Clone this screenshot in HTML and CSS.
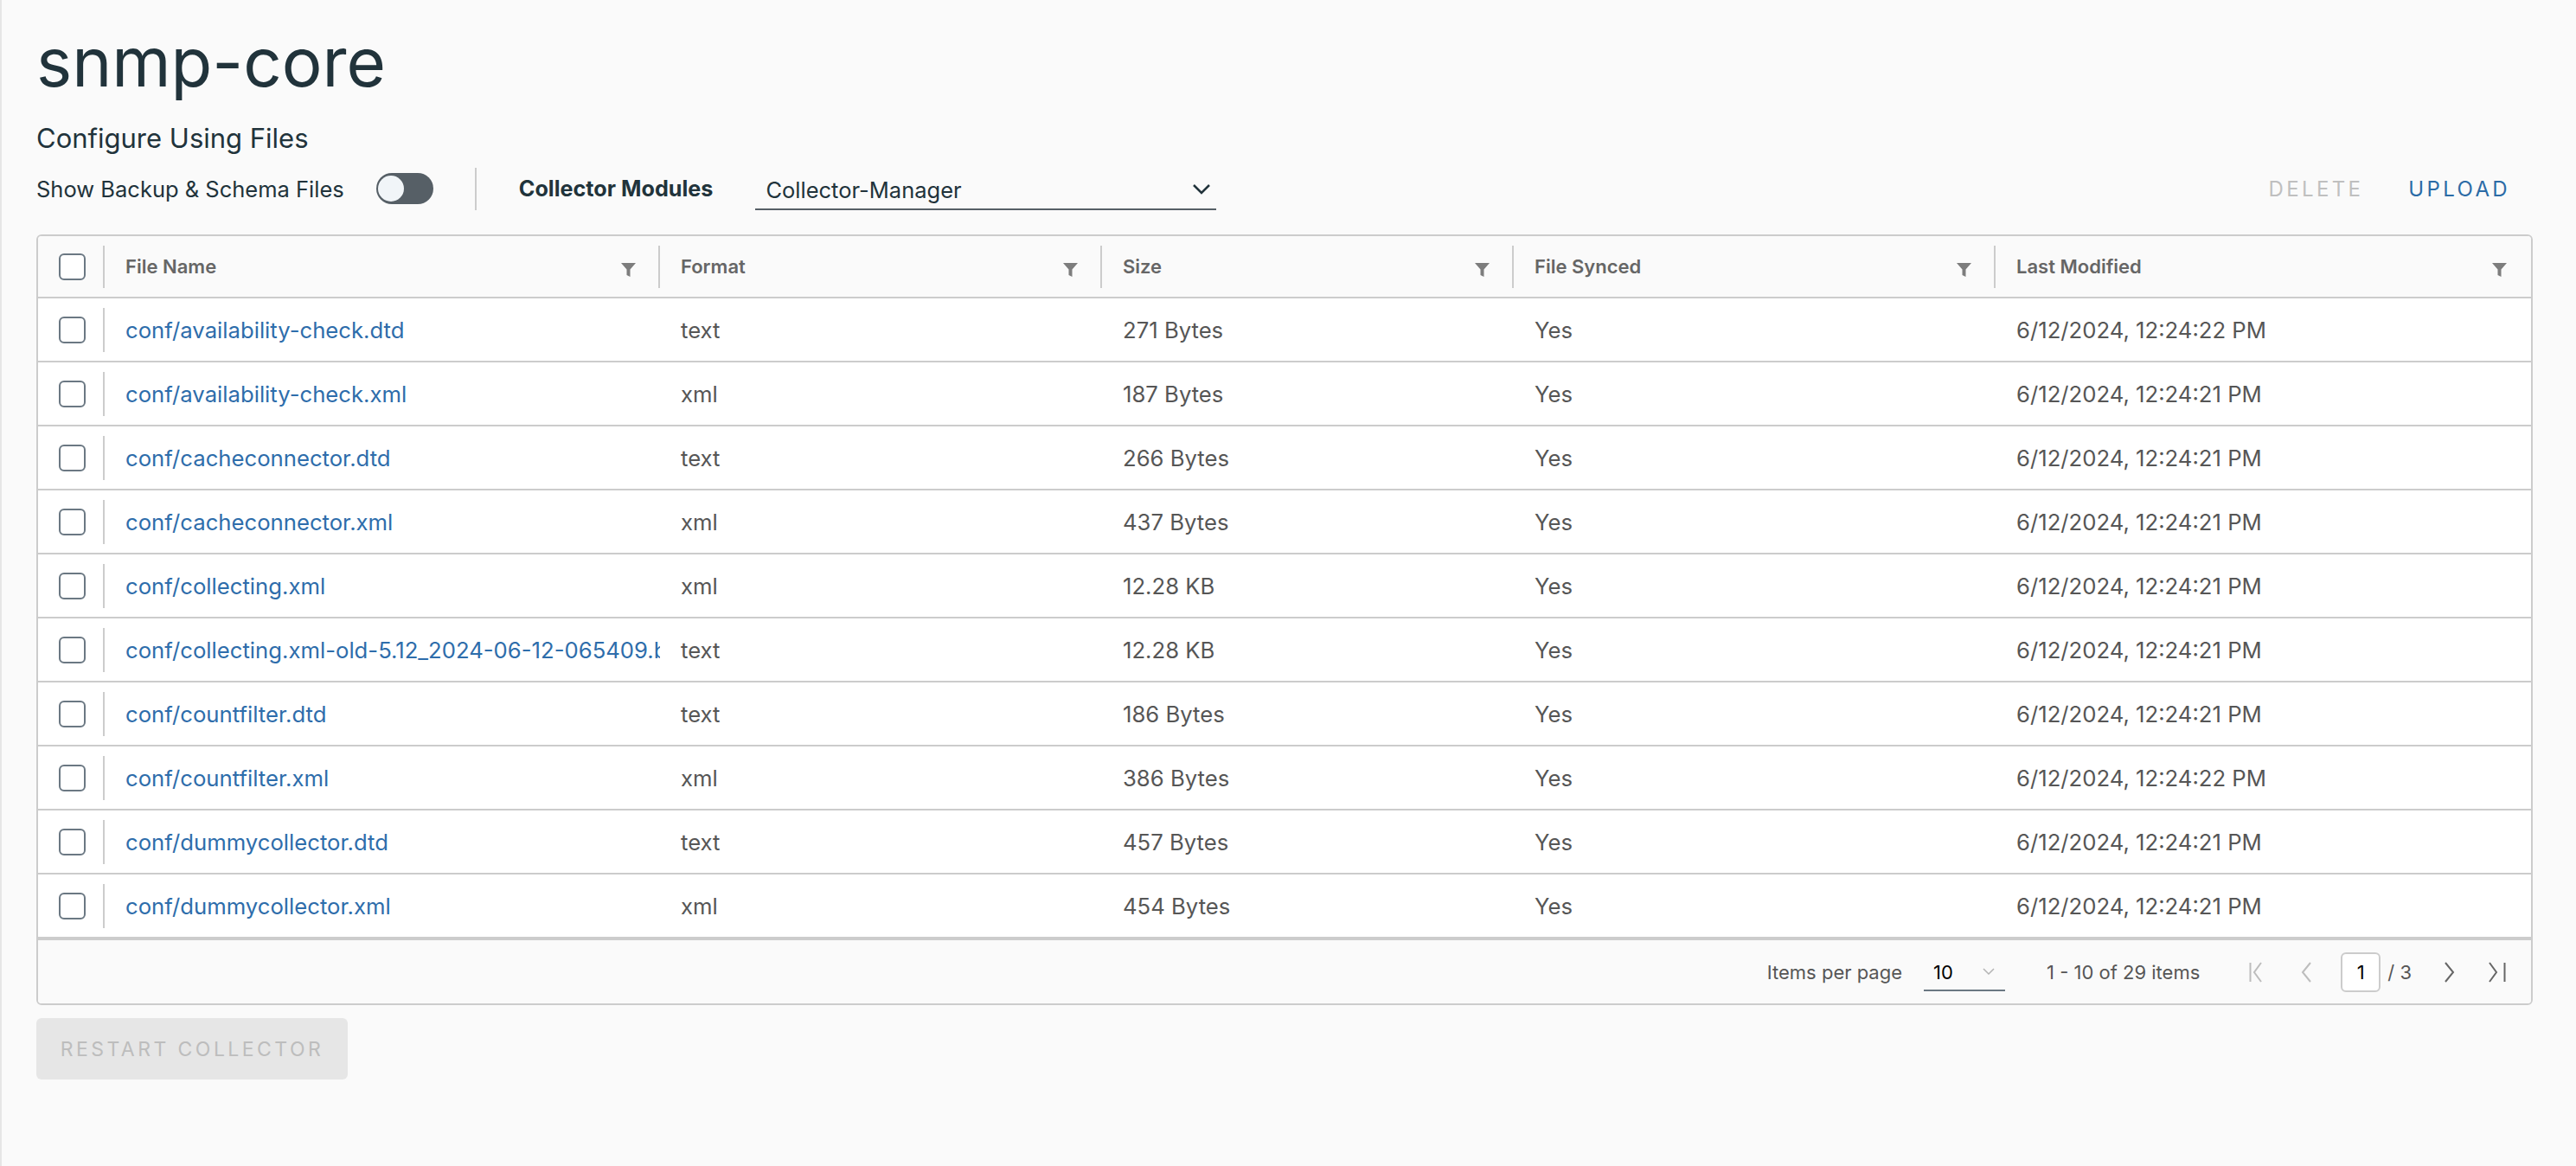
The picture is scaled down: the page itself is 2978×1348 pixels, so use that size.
FILE: index.html
```html
<!DOCTYPE html>
<html lang="en">
<head>
<meta charset="utf-8">
<title>snmp-core</title>
<link rel="stylesheet" href="styles.css">
</head>
<body>
<div class="page">
  <h1 class="title">snmp-core</h1>
  <h2 class="subtitle">Configure Using Files</h2>
  <div class="toolbar">
    <span class="toggle-label">Show Backup &amp; Schema Files</span>
    <span class="toggle"><span class="knob"></span></span>
    <span class="vsep"></span>
    <span class="modules-label">Collector Modules</span>
    <div class="select">
      <span class="select-value">Collector-Manager</span>
      <svg class="select-caret" width="22" height="14" viewBox="0 0 22 14"><polyline points="2,2 11,11 20,2" fill="none" stroke="#21333b" stroke-width="2.5"/></svg>
    </div>
    <div class="toolbar-spacer"></div>
    <button class="link-btn disabled">DELETE</button>
    <button class="link-btn primary">UPLOAD</button>
  </div>

  <div class="grid">
    <div class="row head">
      <div class="cell cb sep"><span class="checkbox"></span></div>
      <div class="cell hcell sep"><span>File Name</span><svg class="funnel" viewBox="0 0 17 17"><path d="M0 1 H17 L10.5 8.5 V17 L6.5 15 V8.5 Z"/></svg></div>
      <div class="cell hcell sep"><span>Format</span><svg class="funnel" viewBox="0 0 17 17"><path d="M0 1 H17 L10.5 8.5 V17 L6.5 15 V8.5 Z"/></svg></div>
      <div class="cell hcell sep"><span>Size</span><svg class="funnel" viewBox="0 0 17 17"><path d="M0 1 H17 L10.5 8.5 V17 L6.5 15 V8.5 Z"/></svg></div>
      <div class="cell hcell sep"><span>File Synced</span><svg class="funnel" viewBox="0 0 17 17"><path d="M0 1 H17 L10.5 8.5 V17 L6.5 15 V8.5 Z"/></svg></div>
      <div class="cell hcell"><span>Last Modified</span><svg class="funnel" viewBox="0 0 17 17"><path d="M0 1 H17 L10.5 8.5 V17 L6.5 15 V8.5 Z"/></svg></div>
    </div>

    <div class="row">
      <div class="cell cb sep"><span class="checkbox"></span></div>
      <div class="cell name"><a href="#">conf/availability-check.dtd</a></div>
      <div class="cell">text</div><div class="cell">271 Bytes</div><div class="cell">Yes</div><div class="cell">6/12/2024, 12:24:22 PM</div>
    </div>
    <div class="row">
      <div class="cell cb sep"><span class="checkbox"></span></div>
      <div class="cell name"><a href="#">conf/availability-check.xml</a></div>
      <div class="cell">xml</div><div class="cell">187 Bytes</div><div class="cell">Yes</div><div class="cell">6/12/2024, 12:24:21 PM</div>
    </div>
    <div class="row">
      <div class="cell cb sep"><span class="checkbox"></span></div>
      <div class="cell name"><a href="#">conf/cacheconnector.dtd</a></div>
      <div class="cell">text</div><div class="cell">266 Bytes</div><div class="cell">Yes</div><div class="cell">6/12/2024, 12:24:21 PM</div>
    </div>
    <div class="row">
      <div class="cell cb sep"><span class="checkbox"></span></div>
      <div class="cell name"><a href="#">conf/cacheconnector.xml</a></div>
      <div class="cell">xml</div><div class="cell">437 Bytes</div><div class="cell">Yes</div><div class="cell">6/12/2024, 12:24:21 PM</div>
    </div>
    <div class="row">
      <div class="cell cb sep"><span class="checkbox"></span></div>
      <div class="cell name"><a href="#">conf/collecting.xml</a></div>
      <div class="cell">xml</div><div class="cell">12.28 KB</div><div class="cell">Yes</div><div class="cell">6/12/2024, 12:24:21 PM</div>
    </div>
    <div class="row">
      <div class="cell cb sep"><span class="checkbox"></span></div>
      <div class="cell name"><a href="#">conf/collecting.xml-old-5.12_2024-06-12-065409.bak</a></div>
      <div class="cell">text</div><div class="cell">12.28 KB</div><div class="cell">Yes</div><div class="cell">6/12/2024, 12:24:21 PM</div>
    </div>
    <div class="row">
      <div class="cell cb sep"><span class="checkbox"></span></div>
      <div class="cell name"><a href="#">conf/countfilter.dtd</a></div>
      <div class="cell">text</div><div class="cell">186 Bytes</div><div class="cell">Yes</div><div class="cell">6/12/2024, 12:24:21 PM</div>
    </div>
    <div class="row">
      <div class="cell cb sep"><span class="checkbox"></span></div>
      <div class="cell name"><a href="#">conf/countfilter.xml</a></div>
      <div class="cell">xml</div><div class="cell">386 Bytes</div><div class="cell">Yes</div><div class="cell">6/12/2024, 12:24:22 PM</div>
    </div>
    <div class="row">
      <div class="cell cb sep"><span class="checkbox"></span></div>
      <div class="cell name"><a href="#">conf/dummycollector.dtd</a></div>
      <div class="cell">text</div><div class="cell">457 Bytes</div><div class="cell">Yes</div><div class="cell">6/12/2024, 12:24:21 PM</div>
    </div>
    <div class="row">
      <div class="cell cb sep"><span class="checkbox"></span></div>
      <div class="cell name"><a href="#">conf/dummycollector.xml</a></div>
      <div class="cell">xml</div><div class="cell">454 Bytes</div><div class="cell">Yes</div><div class="cell">6/12/2024, 12:24:21 PM</div>
    </div>

    <div class="footer">
      <span class="ipp-label">Items per page</span>
      <div class="ipp-select"><span>10</span><svg width="14" height="9" viewBox="0 0 14 9"><polyline points="1,1 7,7 13,1" fill="none" stroke="#b3b3b3" stroke-width="1.5"/></svg></div>
      <span class="range">1 - 10 of 29 items</span>
      <svg class="pg first" width="22" height="24" viewBox="0 0 22 24"><line x1="1.5" y1="1" x2="1.5" y2="23" stroke="#bdbdbd" stroke-width="2"/><polyline points="14,1 6,12 14,23" fill="none" stroke="#bdbdbd" stroke-width="2"/></svg>
      <svg class="pg prev" width="14" height="24" viewBox="0 0 14 24"><polyline points="12,1 3,12 12,23" fill="none" stroke="#bdbdbd" stroke-width="2"/></svg>
      <span class="page-input">1</span>
      <span class="page-total">/ 3</span>
      <svg class="pg next" width="14" height="24" viewBox="0 0 14 24"><polyline points="2,1 11,12 2,23" fill="none" stroke="#666" stroke-width="2"/></svg>
      <svg class="pg last" width="22" height="24" viewBox="0 0 22 24"><polyline points="2,1 10,12 2,23" fill="none" stroke="#666" stroke-width="2"/><line x1="19.5" y1="1" x2="19.5" y2="23" stroke="#666" stroke-width="2"/></svg>
    </div>
  </div>

  <button class="restart">RESTART COLLECTOR</button>
</div>
</body>
</html>
```

FILE: styles.css
```css
* { box-sizing: border-box; }
html, body { margin: 0; padding: 0; }
body {
  background: #fafafa;
  font-family: Inter, "Noto Sans", sans-serif;
  color: #21333b;
  min-height: 1348px;
  border-left: 2px solid #e6e6e6;
}
.page { padding: 0 50px 0 40px; }

.title {
  margin: 22px 0 0;
  font-size: 78px;
  line-height: 100px;
  font-weight: 400;
  color: #21333b;
}
.subtitle {
  margin: 18px 0 0;
  font-size: 31px;
  line-height: 40px;
  font-weight: 400;
  color: #21333b;
}

.toolbar {
  margin-top: 13px;
  height: 50px;
  display: flex;
  align-items: center;
}
.toggle-label { font-size: 25.5px; color: #21333b; }
.toggle {
  margin-left: 37px;
  width: 66px; height: 36px;
  border-radius: 18px;
  background: #565f66;
  position: relative;
  display: inline-block;
}
.knob {
  position: absolute; left: 2px; top: 3px;
  width: 30px; height: 30px; border-radius: 50%;
  background: #f1f5f8;
}
.vsep { margin-left: 48px; width: 2px; height: 49px; background: #cccccc; }
.modules-label { margin-left: 49px; font-size: 25.2px; font-weight: 700; color: #21333b; }
.select {
  margin-left: 49px;
  width: 533px; height: 50px;
  border-bottom: 2px solid #565f66;
  display: flex; align-items: center; justify-content: space-between;
  padding: 4px 6px 0 12px;
}
.select-value { font-size: 25.5px; color: #21333b; }
.toolbar-spacer { flex: 1; }
.link-btn {
  background: none; border: 0; padding: 0; margin: 0;
  font-family: inherit; font-size: 24px; letter-spacing: 0.14em;
  text-transform: uppercase;
}
.link-btn.disabled { color: #bfbfbf; }
.link-btn.primary { color: #2b6ba6; margin-left: 52px; margin-right: 26px; }

.grid {
  margin-top: 28px;
  border: 2px solid #cccccc;
  border-radius: 6px;
  background: #fafafa;
  overflow: hidden;
}
.row {
  display: grid;
  grid-template-columns: 77px 642px 511px 476px 557px 1fr;
  height: 74px;
  border-bottom: 2px solid #cccccc;
  background: #ffffff;
  align-items: center;
}
.row.head { background: #fafafa; height: 72px; }
.cell {
  height: 72px;
  display: flex; align-items: center;
  padding: 0 24px;
  font-size: 25.7px;
  color: #565656;
  white-space: nowrap;
  overflow: hidden;
  position: relative;
}
.row.head .cell { height: 70px; }
.cell.name { padding-right: 0; }
.cell.sep::after {
  content: "";
  position: absolute; right: 0; top: 11px;
  width: 2px; height: 49px;
  background: #cccccc;
}
.row:not(.head) .cell.sep::after { top: 11px; height: 51px; }
.cell.cb { padding: 0 0 0 24px; }
.checkbox {
  display: block;
  width: 31px; height: 31px;
  border: 2px solid #6b7883;
  border-radius: 6px;
  background: #fff;
}
.hcell {
  justify-content: space-between;
  padding: 0 28px 0 24px;
  font-size: 22px;
  font-weight: 600;
  color: #666666;
}
.funnel { width: 17px; height: 17px; fill: #7d7d7d; margin-top: 6px; flex: none; }
.name a { color: #2e6dab; text-decoration: none; }

.footer {
  height: 75px;
  border-top: 2px solid #cccccc;
  display: flex; align-items: center; justify-content: flex-end;
  padding-right: 28px;
  font-size: 22px;
  color: #565656;
  background: #fafafa;
}
.ipp-select {
  margin-left: 25px;
  width: 94px; height: 44px;
  border-bottom: 2px solid #6b7883;
  display: flex; align-items: center; justify-content: space-between;
  padding: 2px 12px 0 11px;
  color: #000;
}
.range { margin-left: 48px; }
.pg { display: block; flex: none; }
.pg.first { margin-left: 57px; }
.pg.prev { margin-left: 37px; }
.page-input {
  margin-left: 33px;
  width: 46px; height: 46px;
  border: 2px solid #cccccc; border-radius: 6px;
  background: #fff;
  display: flex; align-items: center; justify-content: center;
  color: #000;
}
.page-total { margin-left: 8px; }
.pg.next { margin-left: 37px; }
.pg.last { margin-left: 37px; }

.restart {
  margin-top: 15px;
  width: 360px; height: 71px;
  background: #e6e6e6;
  border: 0; border-radius: 6px;
  font-family: inherit; font-size: 23px; letter-spacing: 0.15em;
  color: #bdbdbd;
}
```
